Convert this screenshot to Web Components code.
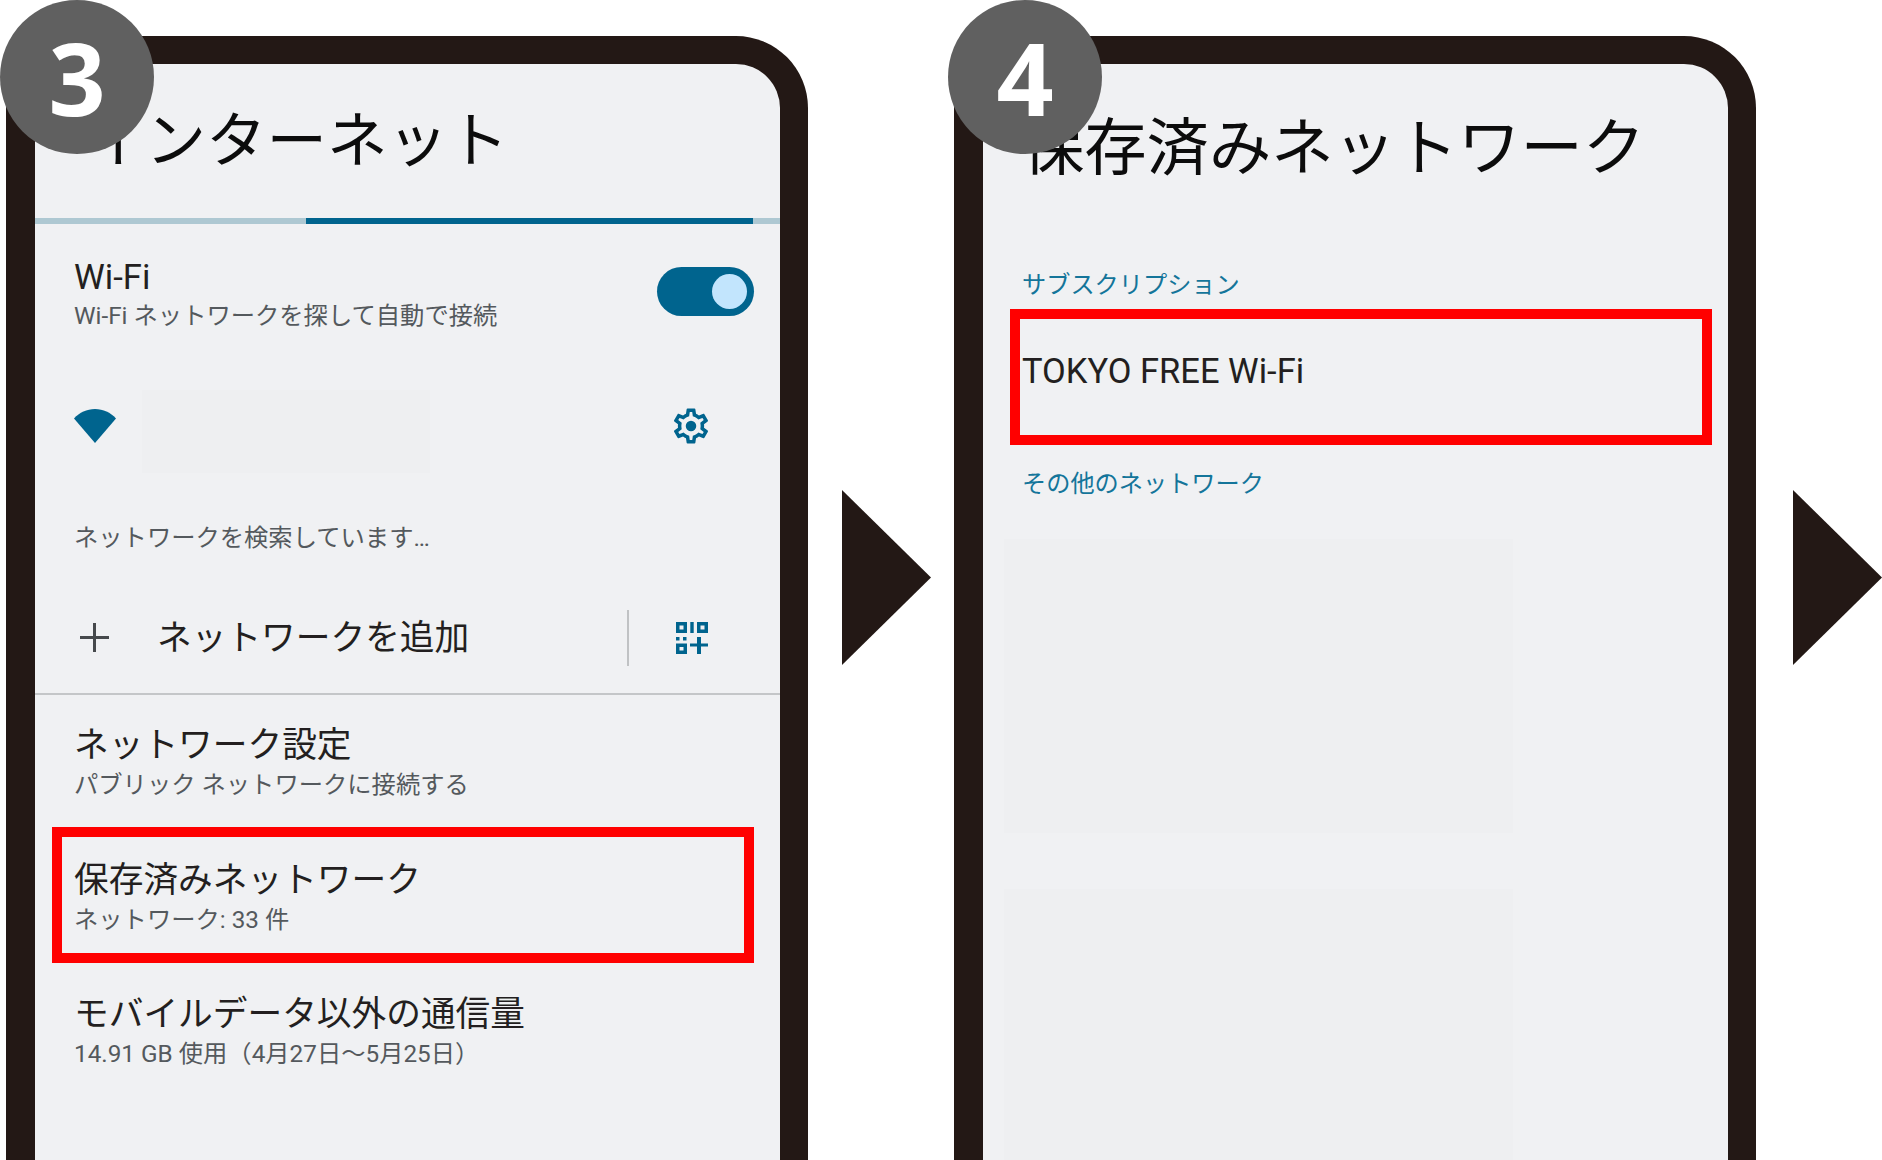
<!DOCTYPE html>
<html lang="ja">
<head>
<meta charset="utf-8">
<title>Wi-Fi 設定</title>
<style>
  html, body { margin: 0; height: 1160px; overflow: hidden; background: #fff; }
  body { font-family: Roboto, "Noto Sans CJK JP", sans-serif; }
  .pagina { display: flex; align-items: flex-start; padding: 36px 0 0 6px; height: 1124px; }
</style>
</head>
<body>
<div class="pagina">
  <paso-telefono numero="3">
    <titulo-pantalla alto="154" margen="50">インターネット</titulo-pantalla>
    <barra-progreso></barra-progreso>
    <fila-wifi></fila-wifi>
    <fila-red></fila-red>
    <fila-buscando>ネットワークを検索しています…</fila-buscando>
    <fila-agregar>ネットワークを追加</fila-agregar>
    <item-lista style="padding:30px 0 0 39px">
      <span slot="primario">ネットワーク設定</span>
      <span slot="secundario">パブリック ネットワークに接続する</span>
    </item-lista>
    <marco-rojo style="margin:26px 0 0 17px;height:136px">
      <item-lista style="padding:23px 0 0 12px">
        <span slot="primario">保存済みネットワーク</span>
        <span slot="secundario">ネットワーク: 33 件</span>
      </item-lista>
    </marco-rojo>
    <item-lista style="padding:31px 0 0 39px">
      <span slot="primario">モバイルデータ以外の通信量</span>
      <span slot="secundario">14.91 GB 使用（4月27日〜5月25日）</span>
    </item-lista>
  </paso-telefono>
  <flecha-paso style="margin-left:34px"></flecha-paso>
  <paso-telefono numero="4" style="margin-left:23px">
    <titulo-pantalla alto="200" margen="39" grande>保存済みネットワーク</titulo-pantalla>
    <titulo-seccion>サブスクリプション</titulo-seccion>
    <marco-rojo style="margin:7px 0 0 27px;height:136px">
      <div style="height:116px;display:flex;align-items:center;padding:0 0 13px 2px;box-sizing:border-box;font-size:34.5px;color:#231f20">TOKYO FREE Wi-Fi</div>
    </marco-rojo>
    <titulo-seccion style="margin-top:18px">その他のネットワーク</titulo-seccion>
    <zona-borrada style="margin:38px 0 0 21px;width:509px;height:294px"></zona-borrada>
    <zona-borrada style="margin:56px 0 0 21px;width:509px;height:290px"></zona-borrada>
  </paso-telefono>
  <flecha-paso style="margin-left:37px"></flecha-paso>
</div>

<script>
class PasoTelefono extends HTMLElement {
  constructor() {
    super();
    this.attachShadow({ mode: 'open' });
  }

  connectedCallback() {
    this.shadowRoot.innerHTML = `
      <style>
        :host { display: block; position: relative; width: 802px; height: 1124px; flex: none; }
        .marco {
          box-sizing: border-box; height: 100%; overflow: hidden;
          background: #f0f1f3; color: #231f20;
          border: solid #231815; border-width: 28px 28px 0 29px;
          border-radius: 72px 72px 0 0;
        }
        .interior { height: 100%; border-radius: 45px 45px 0 0; overflow: hidden; }
        .numero {
          position: absolute; left: -6px; top: -36px; width: 154px; height: 154px;
          border-radius: 50%; background: #606060; color: #fff;
          display: flex; align-items: center; justify-content: center;
          font: 700 100px/1 "Noto Sans", sans-serif;
        }
      </style>
      <div class="marco"><div class="interior"><slot></slot></div></div>
      <div class="numero">${this.getAttribute('numero')}</div>
    `;
  }
}

class TituloPantalla extends HTMLElement {
  constructor() {
    super();
    this.attachShadow({ mode: 'open' });
  }

  connectedCallback() {
    const alto = this.getAttribute('alto');
    const margen = this.getAttribute('margen');
    // el titulo de la pantalla 4 es un poco mas grande y baja mas
    const grande = this.hasAttribute('grande');
    this.shadowRoot.innerHTML = `
      <style>
        :host { display: block; height: ${alto}px; box-sizing: border-box; padding: ${grande ? 43 : 36}px 0 0 ${margen}px; }
        div { font: 400 ${grande ? 62.3 : 60.5}px/72px "Noto Sans CJK JP", sans-serif; color: #0c0c0c; white-space: nowrap; }
      </style>
      <div><slot></slot></div>
    `;
  }
}

class BarraProgreso extends HTMLElement {
  constructor() {
    super();
    this.attachShadow({ mode: 'open' });
    this.shadowRoot.innerHTML = `
      <style>
        :host { display: block; height: 6px; background: #aec8d2; padding: 0 27px 0 271px; }
        div { height: 100%; background: #00648e; }
      </style>
      <div></div>
    `;
  }
}

class ItemLista extends HTMLElement {
  constructor() {
    super();
    this.attachShadow({ mode: 'open' });
    this.shadowRoot.innerHTML = `
      <style>
        :host { display: block; }
        .primario { font: 400 34.7px/40px Roboto, "Noto Sans CJK JP", sans-serif; color: #231f20; white-space: nowrap; }
        .secundario { margin-top: var(--hueco, 4px); font: 400 24.3px/32px Roboto, "Noto Sans CJK JP", sans-serif; color: #54595d; white-space: nowrap; }
      </style>
      <div class="primario"><slot name="primario"></slot></div>
      <div class="secundario"><slot name="secundario"></slot></div>
    `;
  }
}

class FilaWifi extends HTMLElement {
  constructor() {
    super();
    this.attachShadow({ mode: 'open' });
    this.shadowRoot.innerHTML = `
      <style>
        :host { display: flex; justify-content: space-between; height: 136px; box-sizing: border-box; padding: 33px 26px 0 39px; --hueco: 3px; }
        .interruptor { width: 97px; height: 49px; margin-top: 10px; border-radius: 25px; background: #00648e; display: flex; align-items: center; justify-content: flex-end; padding-right: 7px; box-sizing: border-box; }
        .interruptor i { width: 35px; height: 35px; border-radius: 50%; background: #c2e5fd; }
      </style>
      <item-lista>
        <span slot="primario">Wi-Fi</span>
        <span slot="secundario">Wi-Fi ネットワークを探して自動で接続</span>
      </item-lista>
      <div class="interruptor"><i></i></div>
    `;
  }
}

class FilaRed extends HTMLElement {
  constructor() {
    super();
    this.attachShadow({ mode: 'open' });
    this.shadowRoot.innerHTML = `
      <style>
        :host { display: flex; align-items: center; height: 132px; box-sizing: border-box; padding: 0 68px 0 39px; }
        svg { display: block; flex: none; }
        .borrado { flex: none; width: 288px; height: 83px; margin: 11px auto 0 26px; background: #eeeff1; }
      </style>
      <svg width="42" height="34" viewBox="0 0 42 34"><path fill="#00648e" d="M0 9.5C5.500 3.500 12.800 0 21 0s15.500 3.500 21 9.500L21 34Z"/></svg>
      <div class="borrado"></div>
      <svg width="42" height="42" viewBox="0 0 24 24"><path fill="#00648e" d="M12 9a3 3 0 1 0 0 6 3 3 0 0 0 0-6Z"/><path fill="#00648e" d="M19.430 12.980c.040-.320.070-.640.070-.980s-.030-.660-.070-.980l2.110-1.650c.190-.150.240-.420.120-.640l-2-3.460c-.120-.220-.390-.300-.610-.220l-2.490 1c-.520-.400-1.080-.730-1.690-.980l-.380-2.650A.488.488 0 0 0 14 2h-4c-.250 0-.460.180-.490.420l-.380 2.650c-.610.250-1.170.590-1.690.980l-2.490-1a.566.566 0 0 0-.180-.030c-.170 0-.340.090-.430.250l-2 3.460c-.130.220-.070.490.120.640l2.110 1.650c-.040.320-.070.650-.070.980s.030.660.070.980l-2.110 1.650c-.190.150-.240.420-.120.640l2 3.460c.120.220.390.300.610.220l2.490-1c.520.400 1.080.730 1.690.980l.380 2.650c.030.240.240.420.490.420h4c.250 0 .460-.180.490-.420l.380-2.650c.610-.250 1.170-.590 1.690-.980l2.490 1c.060.020.120.030.180.030.170 0 .340-.090.430-.250l2-3.460c.120-.220.070-.490-.120-.640l-2.110-1.650Zm-1.980-1.710c.040.310.050.520.050.730s-.020.430-.050.730l-.140 1.130.890.700 1.080.840-.700 1.210-1.270-.510-1.040-.420-.900.680c-.430.320-.840.560-1.250.730l-1.060.430-.160 1.130-.200 1.350h-1.400l-.190-1.350-.160-1.130-1.060-.430c-.430-.180-.830-.410-1.230-.710l-.910-.700-1.060.430-1.270.510-.700-1.210 1.080-.840.890-.700-.140-1.130c-.030-.310-.050-.540-.050-.740s.020-.430.050-.730l.140-1.130-.890-.700-1.080-.840.700-1.210 1.270.510 1.040.420.900-.680c.430-.320.840-.560 1.250-.730l1.060-.430.160-1.130.200-1.350h1.390l.190 1.350.160 1.130 1.060.430c.430.180.830.410 1.230.710l.910.700 1.060-.430 1.270-.510.700 1.210-1.070.850-.890.700.140 1.130Z"/></svg>
    `;
  }
}

class FilaBuscando extends HTMLElement {
  constructor() {
    super();
    this.attachShadow({ mode: 'open' });
    this.shadowRoot.innerHTML = `
      <style>
        :host { display: flex; align-items: center; height: 90px; box-sizing: border-box; padding: 0 0 4px 39px; font: 400 24.300px Roboto, "Noto Sans CJK JP", sans-serif; color: #54595d; }
      </style>
      <slot></slot>
    `;
  }
}

class FilaAgregar extends HTMLElement {
  constructor() {
    super();
    this.attachShadow({ mode: 'open' });
    this.shadowRoot.innerHTML = `
      <style>
        :host { display: flex; align-items: center; height: 113px; box-sizing: border-box; padding: 0 72px 0 45px; border-bottom: 2px solid #c4c6c8; }
        .mas { flex: none; display: block; }
        .texto { margin: 0 0 5px 48px; font: 400 34.700px "Noto Sans CJK JP", sans-serif; color: #231f20; white-space: nowrap; }
        .linea { width: 2px; height: 56px; background: #c0c2c4; margin: 0 47px 0 auto; }
        .qr { flex: none; display: block; }
      </style>
      <svg class="mas" width="29" height="29" viewBox="0 0 29 29"><path fill="#46494c" d="M13 0h3v13h13v3H16v13h-3V16H0v-3h13Z"/></svg>
      <span class="texto"><slot></slot></span>
      <div class="linea"></div>
      <svg class="qr" width="32" height="32" viewBox="0 0 32 32">
        <g fill="none" stroke="#00648e" stroke-width="3.500">
          <rect x="1.750" y="1.750" width="7.500" height="7.500"/>
          <rect x="22.750" y="1.750" width="7.500" height="7.500"/>
          <rect x="1.750" y="23.250" width="7.500" height="7"/>
        </g>
        <g fill="#00648e">
          <rect x="14.300" y="0" width="3.400" height="11"/>
          <rect x="0" y="15" width="3.500" height="3.500"/>
          <rect x="7" y="15" width="3.500" height="3.500"/>
          <rect x="14" y="21.500" width="18" height="3"/>
          <rect x="21" y="15" width="4" height="17"/>
        </g>
      </svg>
    `;
  }
}

class MarcoRojo extends HTMLElement {
  constructor() {
    super();
    this.attachShadow({ mode: 'open' });
    this.shadowRoot.innerHTML = `
      <style>
        :host { display: block; box-sizing: border-box; width: 702px; border: 10px solid #ff0000; }
      </style>
      <slot></slot>
    `;
  }
}

class TituloSeccion extends HTMLElement {
  constructor() {
    super();
    this.attachShadow({ mode: 'open' });
    this.shadowRoot.innerHTML = `
      <style>
        :host { display: block; padding-left: 39px; font: 400 24.200px/38px "Noto Sans CJK JP", sans-serif; color: #14759a; }
      </style>
      <slot></slot>
    `;
  }
}

class ZonaBorrada extends HTMLElement {
  constructor() {
    super();
    this.attachShadow({ mode: 'open' });
    this.shadowRoot.innerHTML = `
      <style>
        :host { display: block; background: #eeeff1; }
      </style>
    `;
  }
}

class FlechaPaso extends HTMLElement {
  constructor() {
    super();
    this.attachShadow({ mode: 'open' });
    this.shadowRoot.innerHTML = `
      <style>
        :host { display: block; flex: none; width: 89px; height: 175px; margin-top: 454px; }
        svg { display: block; }
      </style>
      <svg width="89" height="175" viewBox="0 0 89 175"><path fill="#231815" d="M0 0L89 87.500 0 175Z"/></svg>
    `;
  }
}

customElements.define('paso-telefono', PasoTelefono);
customElements.define('titulo-pantalla', TituloPantalla);
customElements.define('barra-progreso', BarraProgreso);
customElements.define('item-lista', ItemLista);
customElements.define('fila-wifi', FilaWifi);
customElements.define('fila-red', FilaRed);
customElements.define('fila-buscando', FilaBuscando);
customElements.define('fila-agregar', FilaAgregar);
customElements.define('marco-rojo', MarcoRojo);
customElements.define('titulo-seccion', TituloSeccion);
customElements.define('zona-borrada', ZonaBorrada);
customElements.define('flecha-paso', FlechaPaso);
</script>
</body>
</html>
